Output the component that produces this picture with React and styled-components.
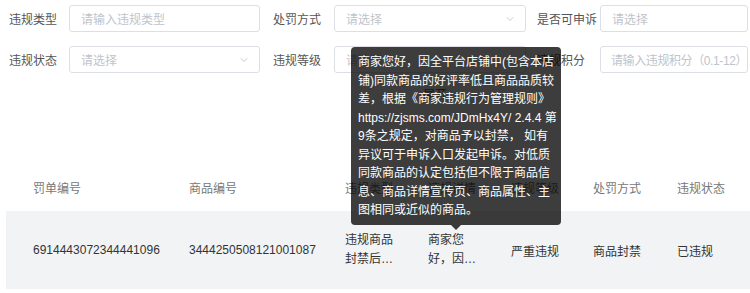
import styled, { createGlobalStyle } from "styled-components";
import { ChevronDown } from "lucide-react";

const GlobalStyle = createGlobalStyle`
    body {
        margin: 0;
        background: #fff;
        font-family: "Liberation Sans", "Noto Sans CJK SC", sans-serif;
        font-size: 12px;
    }
`;

const formRows = [
    [
        { label: "违规类型", labelWidth: 60, width: 191, placeholder: "请输入违规类型" },
        { label: "处罚方式", labelWidth: 61, width: 192, placeholder: "请选择", select: true },
        { label: "是否可申诉", labelWidth: 63, width: 148, placeholder: "请选择" },
    ],
    [
        { label: "违规状态", labelWidth: 60, width: 191, placeholder: "请选择", select: true },
        { label: "违规等级", labelWidth: 61, width: 192, placeholder: "请选择", select: true },
        { label: "违规积分", labelWidth: 63, width: 148, placeholder: "请输入违规积分（0.1-12）", compact: true },
    ],
];

const columns = [
    { title: "罚单编号", width: 156 },
    { title: "商品编号", width: 156 },
    { title: "违规类型", width: 83 },
    { title: "违规详情", width: 83 },
    { title: "违规等级", width: 82 },
    { title: "处罚方式", width: 84 },
    { title: "违规状态", width: 100 },
];

const row = [
    "6914443072344441096",
    "3444250508121001087",
    "违规商品封禁后重新上架",
    "商家您好，因全平台店铺中(包含本店铺)同款商品的好评率低且商品品质较差",
    "严重违规",
    "商品封禁",
    "已违规",
];

const tipLines = [
    "商家您好，因全平台店铺中(包含本店",
    "铺)同款商品的好评率低且商品品质较",
    "差，根据《商家违规行为管理规则》",
    "https://zjsms.com/JDmHx4Y/ 2.4.4 第",
    "9条之规定，对商品予以封禁， 如有",
    "异议可于申诉入口发起申诉。对低质",
    "同款商品的认定包括但不限于商品信",
    "息、商品详情宣传页、商品属性、主",
    "图相同或近似的商品。",
];

function App() {
    return (
        <Page>
            <GlobalStyle />
            <Form>
                {formRows.map((items, i) => (
                    <FormRow key={i}>
                        {items.map((item) => (
                            <FormItem key={item.label}>
                                <Label $width={item.labelWidth}>{item.label}</Label>
                                <Field $width={item.width} $compact={item.compact}>
                                    <span>{item.placeholder}</span>
                                    {item.select && <ChevronDown size={12} strokeWidth={1.5} />}
                                </Field>
                            </FormItem>
                        ))}
                    </FormRow>
                ))}
                <Fold>展开</Fold>
            </Form>
            <Table>
                <HeadRow>
                    {columns.map((col) => (
                        <Cell key={col.title} $width={col.width}>{col.title}</Cell>
                    ))}
                </HeadRow>
                <BodyRow>
                    {row.map((text, i) => (
                        <Cell key={i} $width={columns[i].width}>
                            {i === 2 || i === 3 ? <Clamp>{text}</Clamp> : text}
                        </Cell>
                    ))}
                </BodyRow>
            </Table>
            <Tooltip>
                {tipLines.map((line, i) => (
                    <div key={i}>{line}</div>
                ))}
            </Tooltip>
        </Page>
    );
}

export default App;

const Page = styled.div`
    position: relative;
    width: 750px;
    height: 293px;
    overflow: hidden;
`;

const Form = styled.div`
    padding: 5px 0 0 9px;
    display: flex;
    flex-direction: column;
    gap: 14px;
`;

const FormRow = styled.div`
    display: flex;
    gap: 13px;

    & > *:last-child {
        margin-left: -2px;
    }
`;

const FormItem = styled.div`
    display: flex;
    align-items: center;
`;

const Label = styled.div`
    width: ${(p) => p.$width}px;
    color: #555;
    font-size: 12px;
    white-space: nowrap;
`;

const Field = styled.div`
    box-sizing: border-box;
    width: ${(p) => p.$width}px;
    height: 27px;
    border: 1px solid #dcdfe6;
    border-radius: 3px;
    padding: 0 ${(p) => (p.$compact ? "2px 0 10px" : "9px 0 11px")};
    display: flex;
    align-items: center;
    justify-content: space-between;
    color: #c0c4cc;
    white-space: nowrap;
    overflow: hidden;
    letter-spacing: ${(p) => (p.$compact ? "-0.4px" : "0")};

    svg {
        color: #b4b8bf;
    }
`;

const Fold = styled.div`
    margin-top: 1px;
    padding-left: 414px;
    color: #666;
    line-height: 14px;
`;

const Table = styled.div`
    margin: 62px 0 0 6px;
`;

const HeadRow = styled.div`
    display: flex;
    height: 47px;
    align-items: center;
    color: #777;
`;

const BodyRow = styled.div`
    display: flex;
    height: 78px;
    align-items: center;
    background: #f2f3f5;
    color: #333;
`;

const Cell = styled.div`
    box-sizing: border-box;
    flex: 0 0 ${(p) => p.$width}px;
    padding-left: 27px;
    white-space: nowrap;
`;

const Clamp = styled.div`
    width: 56px;
    white-space: normal;
    line-height: 19px;
    display: -webkit-box;
    -webkit-line-clamp: 2;
    -webkit-box-orient: vertical;
    overflow: hidden;
`;

const Tooltip = styled.div`
    position: absolute;
    left: 351px;
    top: 47px;
    box-sizing: border-box;
    width: 210px;
    padding: 6px 8px 5px 7px;
    background: rgba(0, 0, 0, 0.76);
    border-radius: 4px;
    color: #fff;
    font-size: 12px;
    line-height: 18.5px;
    white-space: nowrap;

    &::after {
        content: "";
        position: absolute;
        left: 100px;
        bottom: -5px;
        border-left: 5px solid transparent;
        border-right: 5px solid transparent;
        border-top: 5px solid rgba(0, 0, 0, 0.76);
    }
`;
